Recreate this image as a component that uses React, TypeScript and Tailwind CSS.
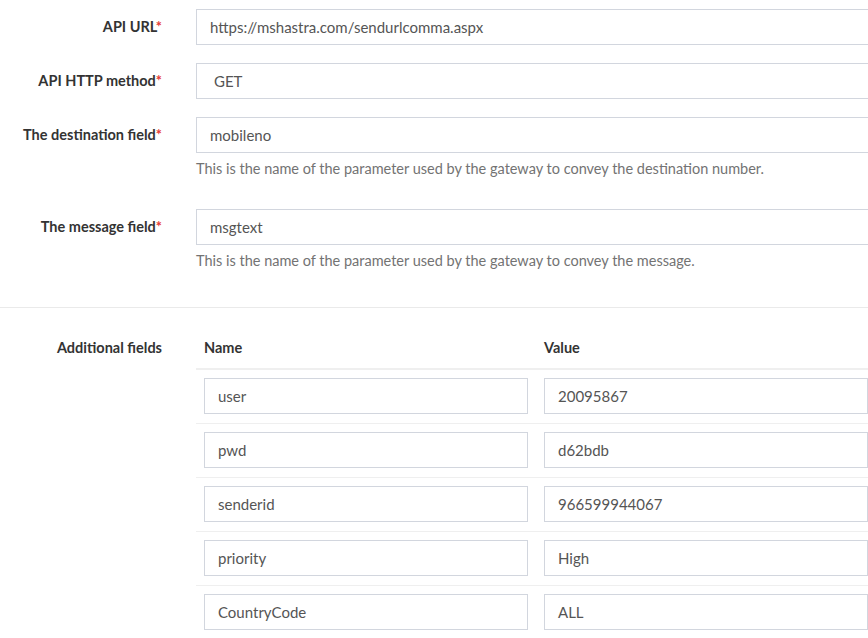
import type { ReactNode } from 'react'

const FONT = { fontFamily: 'Lato, "Liberation Sans", sans-serif' }

const extras: [string, string][] = [
  ['user', '20095867'],
  ['pwd', 'd62bdb'],
  ['senderid', '966599944067'],
  ['priority', 'High'],
  ['CountryCode', 'ALL'],
]

function Label({ children, required }: { children: ReactNode; required?: boolean }) {
  return (
    <div className="w-[162px] shrink-0 pt-2 text-right text-[14.5px] font-bold leading-5 text-[#333]">
      {children}
      {required && <span className="text-[#e53935]">*</span>}
    </div>
  )
}

function TextBox({ value, pad = 'px-[13px]' }: { value: string; pad?: string }) {
  return (
    <div
      className={`flex h-9 w-full items-center border border-[#d2d6de] bg-white ${pad} text-[15px] text-[#555]`}
    >
      {value}
    </div>
  )
}

function Field({
  label,
  value,
  help,
  pad,
}: {
  label: string
  value: string
  help?: string
  pad?: string
}) {
  return (
    <div className={`flex ${help ? 'mb-[30px]' : 'mb-[18px]'}`}>
      <Label required>{label}</Label>
      <div className="ml-[34px] flex-1">
        <TextBox value={value} pad={pad} />
        {help && <p className="mt-[6px] text-[14.5px] leading-5 text-[#737373]">{help}</p>}
      </div>
    </div>
  )
}

export default function App() {
  return (
    <div className="h-[638px] w-[868px] overflow-hidden bg-white" style={FONT}>
      <div className="w-[1000px] pt-[9px] pb-[6px]">
        <Field label="API URL" value="https://mshastra.com/sendurlcomma.aspx" />
        <Field label="API HTTP method" value="GET" pad="px-[17px]" />
        <Field
          label="The destination field"
          value="mobileno"
          help="This is the name of the parameter used by the gateway to convey the destination number."
        />
        <Field
          label="The message field"
          value="msgtext"
          help="This is the name of the parameter used by the gateway to convey the message."
        />
      </div>
      <div className="border-t border-[#eaeaea]" />
      <div className="flex w-[1000px] pt-[22px]">
        <Label>Additional fields</Label>
        <table className="ml-[34px] w-[680px] border-collapse text-[14.5px]">
          <thead>
            <tr>
              <th className="w-[340px] border-b-2 border-[#efefef] px-2 pt-2 pb-[10px] text-left font-bold leading-5 text-[#333]">
                Name
              </th>
              <th className="w-[340px] border-b-2 border-[#efefef] px-2 pt-2 pb-[10px] text-left font-bold leading-5 text-[#333]">
                Value
              </th>
            </tr>
          </thead>
          <tbody>
            {extras.map(([k, v], i) => (
              <tr key={k} className={i === 0 ? '' : 'border-t border-[#efefef]'}>
                <td className="px-2 pt-2 pb-[9px]">
                  <TextBox value={k} />
                </td>
                <td className="px-2 pt-2 pb-[9px]">
                  <TextBox value={v} />
                </td>
              </tr>
            ))}
          </tbody>
        </table>
      </div>
    </div>
  )
}
